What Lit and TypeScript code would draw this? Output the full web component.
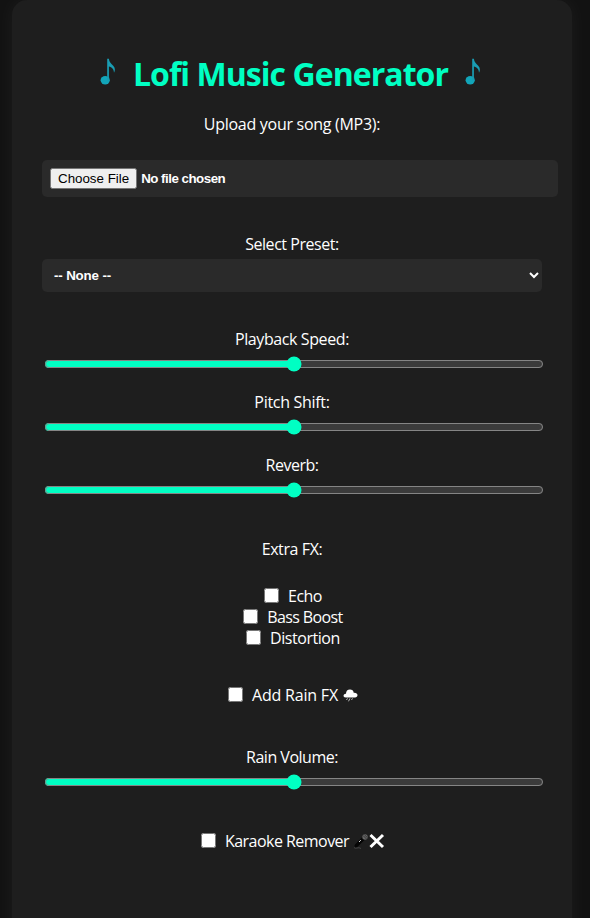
import { LitElement, html, css } from "lit";
import { customElement, property } from "lit/decorators.js";

@customElement("music-note")
class MusicNote extends LitElement {
  static styles = css`
    :host { display: block; width: 16px; height: 28px; }
    svg { display: block; }
  `;
  render() {
    return html`<svg width="16" height="28" viewBox="0 0 16 28">
      <ellipse cx="5.2" cy="22.3" rx="4.6" ry="4.2" fill="#12a5b9" />
      <path d="M7.2 22.5V.8h1.7c.3 3.4 2 4.6 4.1 6.8 2.4 2.500 2.300 4.800 1 7.200-.1-3.900-2.200-5.500-5.100-6.300v14Z" fill="#1a9db3" />
    </svg>`;
  }
}

@customElement("fx-slider")
class FxSlider extends LitElement {
  @property() label = "";
  @property() spacing = "0";
  static styles = css`
    :host { display: flex; flex-direction: column; align-items: center; height: 63px; }
    .label { height: 21px; line-height: 21px; white-space: nowrap; }
    input { width: 500px; height: 16px; margin: 6px 0 0 4px; accent-color: #00ffc3; box-sizing: border-box; }
  `;
  render() {
    return html`<span class="label" style="letter-spacing:${this.spacing}px">${this.label}</span>
      <input type="range" min="0" max="100" value="50" />`;
  }
}

@customElement("fx-check")
class FxCheck extends LitElement {
  @property() label = "";
  @property() spacing = "0";
  static styles = css`
    :host { display: flex; justify-content: center; align-items: center; height: 21px; line-height: 21px; }
    input { width: 15px; height: 15px; margin: 0 9px 2px 2px; flex: none; }
    span { white-space: nowrap; }
  `;
  render() {
    return html`<input type="checkbox" /><span style="letter-spacing:${this.spacing}px">${this.label}</span><slot></slot>`;
  }
}

@customElement("app-root")
class AppRoot extends LitElement {
  static styles = css`
    :host {
      display: block; height: 918px; overflow: hidden; background: #121212; color: #fff;
      font: 16px/21px "Segoe UI", "Open Sans", "Noto Sans", sans-serif;
    }
    .card {
      box-sizing: border-box; width: 560px; height: 960px; margin-left: 12px; padding: 52px 30px 30px;
      border-radius: 15px; background: #1e1e1e; box-shadow: 0 0 20px rgba(255, 255, 255, 0.05);
      display: flex; flex-direction: column;
    }
    header { display: flex; justify-content: center; align-items: center; height: 43px; gap: 17px; margin-right: 3px; }
    h1 { margin: 0; font-size: 32px; line-height: 43px; font-weight: 700; color: #00ffc3; white-space: nowrap; letter-spacing: -0.95px; }
    music-note { margin-bottom: 3px; }
    .label { text-align: center; height: 21px; white-space: nowrap; }
    .upload { margin-top: 19px; letter-spacing: -0.28px; }
    .preset { letter-spacing: -0.45px; }
    .file {
      box-sizing: border-box; width: 516px; height: 37px; margin: 25px 0 37px; padding: 8px; border-radius: 5px;
      background: #2a2a2a; color: #fff; font: 600 13.333px "Liberation Sans", Arial, sans-serif; letter-spacing: -0.5px;
    }
    .file::file-selector-button { font: 400 13.333px "Liberation Sans", Arial, sans-serif; letter-spacing: normal; }
    select {
      flex: none; width: 500px; height: 33px; margin: 4px 0 37px; padding: 8px; border: 0; border-radius: 5px;
      background: #2a2a2a; color: #fff; font: 600 13.333px "Liberation Sans", Arial, sans-serif; letter-spacing: -0.15px;
    }
    .extra { margin: 21px 0 26px; letter-spacing: -0.4px; }
    .rain { margin: 36px 0 41px; }
    .karaoke { margin-top: 21px; }
    .cloud { margin-left: 5px; }
    .mic { margin-left: 4px; }
  `;
  render() {
    return html`<main class="card">
      <header><music-note></music-note><h1>Lofi Music Generator</h1><music-note></music-note></header>
      <div class="label upload">Upload your song (MP3):</div>
      <input class="file" type="file" />
      <div class="label preset">Select Preset:</div>
      <select><option>-- None --</option></select>
      <fx-slider label="Playback Speed:" spacing="-0.4"></fx-slider>
      <fx-slider label="Pitch Shift:" spacing="-0.3"></fx-slider>
      <fx-slider label="Reverb:" spacing="-0.5"></fx-slider>
      <div class="label extra">Extra FX:</div>
      <fx-check label="Echo" spacing="-0.5"></fx-check>
      <fx-check label="Bass Boost" spacing="-0.62"></fx-check>
      <fx-check label="Distortion" spacing="-0.45"></fx-check>
      <fx-check class="rain" label="Add Rain FX" spacing="-0.2">
        <svg class="cloud" width="15" height="13" viewBox="0 0 15 13">
          <path d="M3 8.500C.5 8.500 0 6.500 1 5.500c.6-.7 1.500-.8 2-.7C3 2 4.500.5 7 .5c2 0 3.500 1.200 3.700 3.200C13 3.500 14.500 4.500 14.500 6S13.500 8.500 12 8.500Z" fill="#fff" />
          <path d="M4.500 9.300 3.500 11M7 9.300 5.500 12.300M9.500 9.300 8.500 11" stroke="#bbb" fill="none" />
        </svg>
      </fx-check>
      <fx-slider label="Rain Volume:" spacing="-0.5"></fx-slider>
      <fx-check class="karaoke" label="Karaoke Remover" spacing="-0.53">
        <svg class="mic" width="32" height="17" viewBox="0 0 32 17">
          <path d="M9.500 4 2 11.500Q.8 13 2 14t2.500-.3L12 6.500Z" fill="#050505" />
          <circle cx="12" cy="4" r="2.700" fill="#666" />
          <path d="M10 2.500 13.500 6M11.500 1.800 14.300 4.500" stroke="#242424" stroke-width=".7" />
          <path d="m6 9 1.800-1.800" stroke="#ddd" />
          <path d="M1 14.500q1 1.300 3 .5t4 .5" stroke="#444" fill="none" />
          <path d="m17.500 2 12.500 12M30 2 17.500 14" stroke="#fff" stroke-width="3" />
        </svg>
      </fx-check>
    </main>`;
  }
}
